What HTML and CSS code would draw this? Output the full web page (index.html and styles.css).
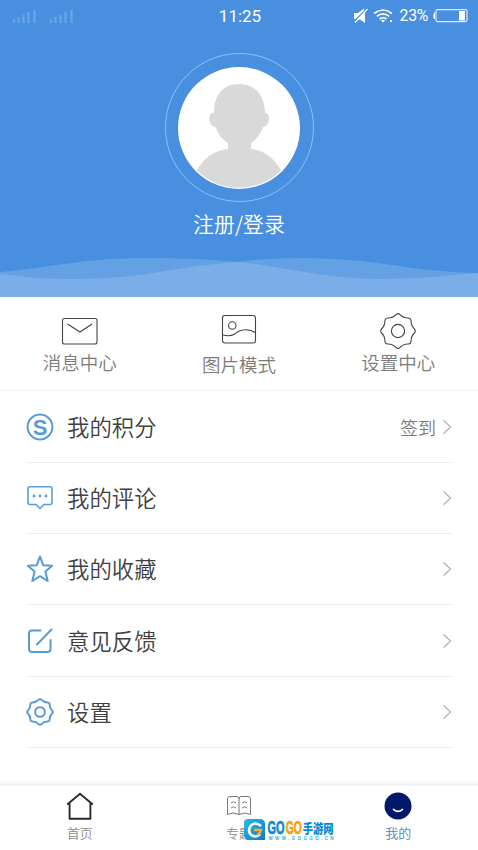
FILE: index.html
```html
<!DOCTYPE html>
<html lang="zh-CN">
<head>
<meta charset="utf-8">
<title>我的</title>
<link rel="stylesheet" href="styles.css">
</head>
<body>
<svg width="0" height="0" class="defs">
  <symbol id="gear" viewBox="-19 -19 38 38">
    <path vector-effect="non-scaling-stroke" d="M16.71-1.76Q18 0 16.71 1.76Q12.8 5.3 13.06 10.57Q12.73 12.73 10.57 13.06Q5.3 12.8 1.76 16.71Q0 18-1.76 16.71Q-5.3 12.8-10.57 13.06Q-12.73 12.73-13.06 10.57Q-12.8 5.3-16.71 1.76Q-18 0-16.71-1.76Q-12.8-5.3-13.06-10.57Q-12.73-12.73-10.57-13.06Q-5.3-12.8-1.76-16.71Q0-18 1.76-16.71Q5.3-12.8 10.57-13.06Q12.73-12.73 13.06-10.57Q12.8-5.3 16.71-1.76Z"/>
    <circle vector-effect="non-scaling-stroke" r="6.6"/>
  </symbol>
  <symbol id="chevron" viewBox="0 0 10 16"><path d="M1.5 1.2L8.5 8L1.5 14.8"/></symbol>
</svg>
<div class="app">
  <header class="hero">
    <div class="status">
      <svg class="signals" width="64" height="16" viewBox="0 0 64 16">
        <path d="M2 11v4M6.5 9v6M11.500 7v8M16.500 4v11M22.500 2v13M39 11v4M43.500 9v6M48.500 7v8M53.500 4v11M59.500 2v13"/>
      </svg>
      <span class="time">11:25</span>
      <div class="status-right">
        <svg width="14" height="16" viewBox="0 0 14 16"><path fill="#fff" d="M0 5h4l6-4.500v2L1.500 11H0zM3 12l8-8v11l-5-3.500z"/><path stroke="#fff" stroke-width="1.2" d="M1 14.500L13.500 1"/></svg>
        <svg class="wifi" width="21" height="16" viewBox="0 0 21 16"><g fill="none" stroke="#fff" stroke-width="1.700"><path d="M1 5.500Q10 -1.500 19 5.500M3.800 8.300Q10 3.500 16.200 8.300M6.500 11Q10 8.500 13.500 11"/></g><path fill="#fff" d="M7.800 12.500Q10 11 12.200 12.500L10 14.500zM17 12h2v2h-2z"/></svg>
        <span class="percent">23%</span>
        <svg width="36" height="16" viewBox="0 0 36 16"><rect x="4" y="1.600" width="31" height="12" rx="1.500" fill="none" stroke="#d9eaff" stroke-width="1.200"/><path fill="#fff" d="M3 4.500H2Q.5 8 2 11h1zM27 3h6v9.500H27z"/></svg>
      </div>
    </div>
    <div class="ring">
      <svg width="122" height="122" viewBox="0 0 122 122">
        <defs><clipPath id="face"><circle cx="61" cy="61" r="59.800"/></clipPath></defs>
        <circle cx="61" cy="61" r="61" fill="#fff"/>
        <g clip-path="url(#face)" fill="#d9d9d9">
          <path d="M61 17C77 17 86.500 28 87 45.500C93 46 92 59 85 60Q81 71 73 76V82Q93 84 104 105V122H18V105Q29 84 50 82V76Q41 71 37.500 60C30 59 29 46 36 45.500C36 28 45 17 61 17Z"/>
        </g>
      </svg>
    </div>
    <div class="login">注册/登录</div>
    <svg class="waves" width="478" height="44" viewBox="0 0 478 44">
      <path fill="#64a0e4" d="M0 19C55 14 85 5 145 5C180 5 205 6 239 9C270 4 315 4 350 7C395 11 425 19 478 20V44H0Z"/>
      <path fill="#7baee8" d="M0 21C25 24 45 26 75 26C145 26 175 13 239 9C280 13 325 26 380 26C420 26 450 22 478 20V44H0Z"/>
    </svg>
  </header>

  <nav class="shortcuts">
    <a class="shortcut">
      <svg width="38" height="36" viewBox="0 0 38 36"><rect x="1.500" y="5.500" width="34.500" height="25.500" rx="2"/><path d="M6.500 11L19 19L31 11"/></svg>
      <span>消息中心</span>
    </a>
    <a class="shortcut shortcut-mid">
      <svg width="38" height="36" viewBox="0 0 38 36"><rect x="2.500" y="2.500" width="33" height="27.500" rx="2.500"/><circle cx="12.300" cy="12.500" r="3.700"/><path d="M3 22Q10 24 14.500 21C18 18.500 20 16.700 25 16.700Q31 16.500 35 19.500"/></svg>
      <span>图片模式</span>
    </a>
    <a class="shortcut">
      <svg width="38" height="36"><use href="#gear" y="-1" width="38" height="38"/></svg>
      <span>设置中心</span>
    </a>
  </nav>

  <main class="list">
    <a class="row">
      <svg class="icon" width="28" height="28" viewBox="0 0 28 28"><circle cx="14" cy="14" r="12.400"/><text x="14" y="21.500" text-anchor="middle">S</text></svg>
      <span class="name">我的积分</span><span class="extra">签到</span>
      <svg class="chevron" width="10" height="16"><use href="#chevron"/></svg>
    </a>
    <a class="row">
      <svg class="icon thin" width="28" height="28" viewBox="0 0 28 28"><path d="M4 2.800H24Q26 2.800 26 4.800V18.500Q26 20.500 24 20.500H18L14 24.500L10 20.500H4Q2 20.500 2 18.500V4.800Q2 2.800 4 2.800Z"/><path class="dots" d="M8 12h.01M14 12h.01M20 12h.01"/></svg>
      <span class="name">我的评论</span>
      <svg class="chevron" width="10" height="16"><use href="#chevron"/></svg>
    </a>
    <a class="row">
      <svg class="icon" width="28" height="28" viewBox="0 0 28 28"><path d="M14 1.500L17.300 10.300L26.200 10.800L19.400 16.600L21.700 26L14 21.200L6.300 26L8.600 16.600L1.800 10.800L10.700 10.300Z"/></svg>
      <span class="name">我的收藏</span>
      <svg class="chevron" width="10" height="16"><use href="#chevron"/></svg>
    </a>
    <a class="row">
      <svg class="icon" width="28" height="28" viewBox="0 0 28 28"><path d="M14.500 3.500H6Q3 3.500 3 6.500V22Q3 25 6 25H21.500Q24.500 25 24.500 22V13M11 17.500L25.500 2.500"/></svg>
      <span class="name">意见反馈</span>
      <svg class="chevron" width="10" height="16"><use href="#chevron"/></svg>
    </a>
    <a class="row">
      <svg class="icon" width="28" height="28"><use href="#gear" width="28" height="28"/></svg>
      <span class="name">设置</span>
      <svg class="chevron" width="10" height="16"><use href="#chevron"/></svg>
    </a>
  </main>

  <footer class="tabs">
    <a class="tab">
      <svg width="30" height="30" viewBox="0 0 30 30"><path fill="none" stroke="#2b2b2b" stroke-width="1.900" stroke-linejoin="round" stroke-linecap="round" d="M4.600 13V27.800H25.400V13M2.800 13L15 2.800L27.200 13"/></svg>
      <span>首页</span>
    </a>
    <a class="tab">
      <svg width="30" height="30" viewBox="0 0 30 30"><g fill="none" stroke="#777" stroke-width="1"><path d="M15 8Q15 5.500 13 5.500H6Q3.500 5.500 3.500 8V23.500Q9 20.500 15 23.500Q21 20.500 26.500 23.500V8Q26.500 5.500 24 5.500H17Q15 5.500 15 8V23.500M7 12Q9.500 9.500 12 12M7 17Q9.500 14.500 12 17M18 12Q20.500 9.500 23 12M18 17Q20.500 14.500 23 17"/></g></svg>
      <span>专题</span>
    </a>
    <a class="tab active">
      <svg width="30" height="30" viewBox="0 0 30 30"><circle cx="15" cy="15" r="13.500" fill="#03176b"/><path fill="none" stroke="#fff" stroke-width="1.600" stroke-linecap="round" d="M10.500 18.300Q15 22.500 19.500 18.300"/></svg>
      <span>我的</span>
    </a>
    <svg class="watermark" width="94" height="22" viewBox="0 0 94 22">
      <defs><linearGradient id="sky" x2="1" y2="1"><stop stop-color="#27b9ec"/><stop offset="1" stop-color="#087dcc"/></linearGradient></defs>
      <path fill="url(#sky)" d="M4 0H17Q21 1 21 5V21H4Q0 20 0 16V4Q0 0 4 0Z"/>
      <path fill="none" stroke="#fff" stroke-width="2.600" d="M17 7Q11 2 6.500 7Q3 13 8 16.500Q13 19 16 15"/>
      <path fill="none" stroke="#ffad20" stroke-width="2.400" d="M10 11H17Q16 15 13 16"/>
      <text class="gogo blue" x="23.500" y="14.800" textLength="17" lengthAdjust="spacingAndGlyphs">GO</text>
      <text class="gogo orange" x="41.800" y="14.800" textLength="16" lengthAdjust="spacingAndGlyphs">GO</text>
      <text class="cn" x="58.700" y="13.500" textLength="31" lengthAdjust="spacingAndGlyphs">手游网</text>
      <text class="url" x="24.500" y="20.500" textLength="65">WWW.GOGGO.CN</text>
    </svg>
  </footer>
</div>
</body>
</html>
```

FILE: styles.css
```css
* { box-sizing: border-box; }
body {
  margin: 0;
  background: #fff;
  font-family: "Noto Sans CJK SC", sans-serif;
  font-weight: 350;
}
.defs { position: absolute; }
.app {
  width: 478px;
  height: 850px;
  display: flex;
  flex-direction: column;
  overflow: hidden;
}
svg { display: block; flex: none; }

.hero {
  height: 297px;
  flex: none;
  display: flex;
  flex-direction: column;
  align-items: center;
  background: #488fe0;
  color: #fff;
}
.status {
  width: 100%;
  height: 31px;
  padding: 0 10px 0 12px;
  display: grid;
  grid-template-columns: 1fr auto 1fr;
  align-items: center;
  font-family: Roboto, sans-serif;
  font-weight: 400;
}
.signals { fill: none; stroke: #6ba5e8; stroke-width: 2.2; }
.time { font-size: 17px; }
.status-right {
  display: flex;
  align-items: center;
  justify-content: flex-end;
  gap: 5px;
}
.wifi { margin-right: 1px; }
.percent { font-size: 15.800px; letter-spacing: -.3px; margin-right: -1px; }
.ring {
  width: 149px;
  height: 149px;
  margin-top: 22px;
  border: 1px solid #8fc0f6;
  border-radius: 50%;
  display: grid;
  place-items: center;
  flex: none;
}
.login {
  margin-top: 5px;
  height: 32px;
  line-height: 32px;
  font-size: 20.900px;
}
.waves { margin-top: auto; }

.shortcuts {
  height: 94px;
  flex: none;
  display: grid;
  grid-template-columns: repeat(3, 1fr);
  border-bottom: 1px solid #f0f0f0;
}
.shortcut {
  display: flex;
  flex-direction: column;
  align-items: center;
  padding-top: 16px;
  font-size: 18.500px;
  line-height: 27px;
  color: #7c7c7c;
}
.shortcut svg { fill: none; stroke: #444; stroke-width: 1.100; }
.shortcut-mid span { padding-top: 2px; }

.list { margin: 0 26px; flex: none; padding-top: .5px; }
.row {
  height: 71.300px;
  display: flex;
  align-items: center;
  border-bottom: 1px solid #ededed;
}
.icon {
  fill: none;
  stroke: #5b9bd5;
  stroke-width: 2;
  stroke-linejoin: round;
  stroke-linecap: round;
}
.thin { stroke-width: 1.600; }
.icon text {
  fill: #5b9bd5;
  stroke: none;
  font: 700 22px "Liberation Sans", sans-serif;
}
.icon .dots { stroke-width: 2.800; }
.name {
  margin-left: 13px;
  margin-right: auto;
  padding-bottom: 2px;
  font-size: 22.400px;
  color: #404040;
}
.extra { font-size: 18px; color: #7c7c7c; margin-right: 6px; }
.chevron { fill: none; stroke: #b5b5b5; stroke-width: 1.300; }

.tabs {
  position: relative;
  margin-top: auto;
  height: 70px;
  padding-top: 6px;
  display: grid;
  grid-template-columns: repeat(3, 1fr);
  background: linear-gradient(#fff, #f1f1f1 6px, #fff 6px);
}
.tab {
  display: flex;
  flex-direction: column;
  align-items: center;
  padding-top: 5px;
  font-size: 13px;
  line-height: 24px;
  color: #8c8c8c;
}
.active { color: #4c86c2; }
.watermark { position: absolute; left: 244px; top: 39px; }
.gogo { font: 700 18px "Liberation Sans", sans-serif; stroke-width: .7; }
.blue { fill: #078bd5; stroke: #078bd5; }
.orange { fill: #ff9c08; stroke: #ff9c08; }
.cn { font: 900 13px "Noto Sans CJK SC", sans-serif; fill: #078bd5; }
.url { font: 700 4.500px "Liberation Sans", sans-serif; fill: #3ba7dc; }
```
